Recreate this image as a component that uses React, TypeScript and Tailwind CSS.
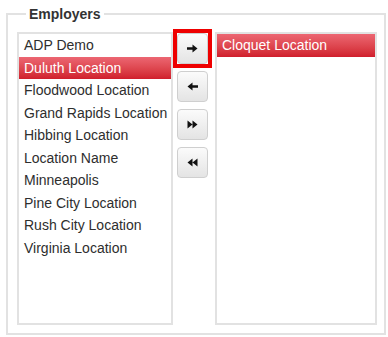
import React from "react";

const left = [
  "ADP Demo",
  "Duluth Location",
  "Floodwood Location",
  "Grand Rapids Location",
  "Hibbing Location",
  "Location Name",
  "Minneapolis",
  "Pine City Location",
  "Rush City Location",
  "Virginia Location",
];
const right = ["Cloquet Location"];

function Row({ label, selected }: { label: string; selected: boolean }) {
  return (
    <div
      className={
        "h-[22.5px] leading-[22px] pl-[5px] whitespace-nowrap " +
        (selected
          ? "text-white bg-gradient-to-b from-[#ec6672] to-[#d01d2c]"
          : "text-[#2e2e2e]")
      }
    >
      {label}
    </div>
  );
}

function Btn({ children }: { children: React.ReactNode }) {
  return (
    <div className="w-[31px] h-[31px] flex items-center justify-center rounded-[4px] border border-[#cfcfcf] bg-gradient-to-b from-[#fbfbfb] to-[#e4e4e4]">
      {children}
    </div>
  );
}

export default function App() {
  return (
    <div
      className="w-[388px] h-[337px] bg-white pt-[6px]"
      style={{ fontFamily: '"Liberation Sans", Arial, sans-serif' }}
    >
      <fieldset className="mx-[6px] w-[380px] border-2 border-[#e2e2e2] pl-[9px] pr-[7px] pt-[10px] pb-[8px] text-[14px]">
        <legend className="ml-[9px] px-[3px] font-bold text-[#333] leading-[16px]">Employers</legend>
        <div className="flex items-start">
          <div className="w-[156px] h-[293px] border-2 border-[#e2e2e2] bg-white">
            {left.map((l, i) => (
              <Row key={l} label={l} selected={i === 1} />
            ))}
          </div>
          <div className="ml-[4px] mt-[1px] flex flex-col gap-[7px]">
            <div className="-m-[4px] border-[4px] border-[#ee0000]">
              <Btn>
                <svg width="11" height="9" viewBox="0 0 11 9">
                  <path d="M0 3.3H5.5V0.5L10.5 4.5L5.5 8.5V5.7H0Z" fill="#111" />
                </svg>
              </Btn>
            </div>
            <Btn>
              <svg width="11" height="9" viewBox="0 0 11 9">
                <path d="M11 3.3H5.5V0.5L0.5 4.5L5.5 8.5V5.7H11Z" fill="#111" />
              </svg>
            </Btn>
            <Btn>
              <svg width="11" height="9" viewBox="0 0 11 9">
                <path d="M0.5 0.5L5.5 4.5L0.5 8.5ZM5.5 0.5L10.5 4.5L5.5 8.5Z" fill="#111" />
              </svg>
            </Btn>
            <Btn>
              <svg width="11" height="9" viewBox="0 0 11 9">
                <path d="M10.5 0.5L5.5 4.5L10.5 8.5ZM5.5 0.5L0.5 4.5L5.5 8.5Z" fill="#111" />
              </svg>
            </Btn>
          </div>
          <div className="ml-[7px] w-[162px] h-[293px] border-2 border-[#e2e2e2] bg-white">
            {right.map((l) => (
              <Row key={l} label={l} selected />
            ))}
          </div>
        </div>
      </fieldset>
    </div>
  );
}
